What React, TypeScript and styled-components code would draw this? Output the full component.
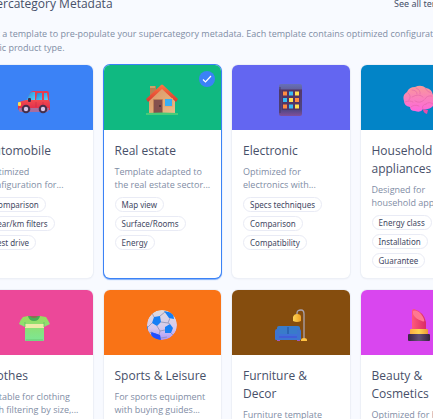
import React, { useState } from 'react';
import styled, { createGlobalStyle } from 'styled-components';

const GlobalStyle = createGlobalStyle`
  *, *::before, *::after { box-sizing: border-box; }
  body {
    margin: 0;
    background: #f8faff;
    overflow: hidden;
    font-family: "Open Sans", "Noto Sans", sans-serif;
    color: #475069;
  }
`;

const Page = styled.main`
  margin: 0 -45px 0 -25px;
  height: 100vh;
  overflow: hidden;
`;

const Header = styled.header`
  display: flex;
  justify-content: space-between;
  align-items: center;
  height: 24px;
  margin-top: -8px;
`;

const Heading = styled.h2`
  margin: 0;
  font-size: 12px;
  font-weight: 500;
  line-height: 24px;
`;

const HeaderLink = styled.a`
  width: 84px;
  font-family: "Noto Sans", "Open Sans", sans-serif;
  font-size: 9px;
  font-weight: 400;
  line-height: 20px;
  color: inherit;
  text-decoration: none;
  white-space: nowrap;
`;

const Intro = styled.p`
  margin: 11px 0 10px;
  font-size: 9px;
  line-height: 14px;
  color: #7f8da5;
`;

const Grid = styled.div`
  display: grid;
  grid-template-columns: repeat(4, minmax(0, 1fr));
  gap: 12px 11px;
`;

const Card = styled.button<{ $selected: boolean }>`
  position: relative;
  display: flex;
  flex-direction: column;
  align-items: stretch;
  justify-content: flex-start;
  padding: 0;
  border: 0;
  border-radius: 6px;
  background: #fff;
  color: inherit;
  font-family: inherit;
  text-align: left;
  cursor: pointer;
  box-shadow: ${(p) => (p.$selected ? '0 0 0 1px #3b82f6, 0 1px 1px 1px #3b82f6a0' : '0 0 0 1px #edf0f7, 0 1px 2px #1e293b14')};
`;

const Cover = styled.span<{ $color: string }>`
  display: flex;
  justify-content: center;
  height: 65px;
  padding-top: 19px;
  border-radius: 6px 6px 0 0;
  background: ${(p) => p.$color};
`;

const Picture = styled.svg`
  width: 32px;
  height: 32px;
`;

const Badge = styled.span`
  position: absolute;
  top: 6px;
  right: 6px;
  display: grid;
  place-items: center;
  width: 16px;
  height: 16px;
  border-radius: 50%;
  background: #3b82f6;
`;

const Body = styled.span`
  display: flex;
  flex-direction: column;
  padding: 12px 11px 10px;
`;

const Title = styled.span`
  font-size: 12px;
  font-weight: 500;
  line-height: 18px;
`;

const Description = styled.span`
  margin: 5px 0 6px;
  font-size: 9px;
  line-height: 13px;
  color: #7f8da5;
  white-space: pre;
`;

const Tags = styled.span`
  display: flex;
  flex-direction: column;
  align-items: flex-start;
  gap: 4px;
`;

const Tag = styled.span`
  height: 15px;
  padding: 0 6px;
  border: 1px solid #e9ebf5;
  border-radius: 8px;
  font-family: "Noto Sans", "Open Sans", sans-serif;
  font-size: 8px;
  font-weight: 400;
  line-height: 13px;
  color: #3f4863;
  white-space: nowrap;
`;

const Car = () => (
  <Picture viewBox="0 0 32 32" aria-hidden="true">
    <defs>
      <linearGradient id="carGlass" x2="1" y2="1"><stop stopColor="#2388d8" /><stop offset="1" stopColor="#55d4ff" /></linearGradient>
      <linearGradient id="carBody" x2="0" y2="1"><stop stopColor="#f24b50" /><stop offset="1" stopColor="#df294b" /></linearGradient>
    </defs>
    <path d="M9 17 12 9Q13 7 16 7H29Q31 7 31 10V17Z" fill="#e63d51" />
    <path d="M8 17 12 9Q13 8 15 8H17V17Z" fill="url(#carGlass)" />
    <path d="M19 10Q19 9 20 9H24V16H18Z M26 9H29L30 16H26Z" fill="url(#carGlass)" />
    <path d="M0 20Q1 17 8 16H31Q32 17 32 20V26H1Q0 26 0 24Z" fill="url(#carBody)" />
    <path d="M1 24H31Q31 28 28 28H3Q0 28 1 24Z" fill="#a96d9d" />
    <rect x="0" y="18" width="3" height="4" rx="1" fill="#ffdb4a" />
    <rect x="10" y="14" width="3" height="4" rx="1" fill="#442a4b" />
    <path d="M18 18V23M25 18V23" stroke="#c82945" strokeWidth=".6" />
    <circle cx="8" cy="25" r="4.3" fill="#45304d" /><circle cx="25" cy="25" r="4.3" fill="#45304d" />
    <circle cx="8" cy="25" r="2.2" fill="#d9c6ea" /><circle cx="25" cy="25" r="2.2" fill="#d9c6ea" />
  </Picture>
);

const House = () => (
  <Picture viewBox="0 0 32 32" aria-hidden="true">
    <defs>
      <linearGradient id="houseWall" x2="1" y2="1"><stop stopColor="#d99362" /><stop offset="1" stopColor="#eabd8b" /></linearGradient>
      <linearGradient id="houseRoof" x2="0" y2="1"><stop stopColor="#ff7541" /><stop offset="1" stopColor="#d73830" /></linearGradient>
    </defs>
    <path d="M4 2H10V14H4Z" fill="#b68052" /><path d="M4 2H9V4H4Z" fill="#cda068" />
    <path d="M3 15 16 3 29 15V30H3Z" fill="url(#houseWall)" />
    <path d="M15 1Q16 0 17 1L32 15 30 18 16 5 2 18 0 15Z" fill="url(#houseRoof)" />
    <rect x="7" y="15" width="10" height="15" rx="1" fill="#bb7e58" />
    <rect x="8" y="16" width="8" height="14" fill="#85504e" />
    <circle cx="14" cy="22" r=".9" fill="#432c35" />
    <rect x="18" y="14" width="9" height="9" rx="1" fill="#e6a970" />
    <rect x="19" y="15" width="7" height="7" fill="#37aff5" />
    <path d="M0 29Q16 28 32 29V31H0Z" fill="#47cc78" />
  </Picture>
);

const Phone = () => {
  const keys = ['#ff8b42', '#36bcf6', '#ffe052', '#36bcf6', '#ffe052', '#ff8b42', '#ff8b42', '#36bcf6', '#ffe052'];
  return (
    <Picture viewBox="0 0 32 32" aria-hidden="true">
      <defs>
        <linearGradient id="phoneBody" x2="0" y2="1"><stop stopColor="#6770b8" /><stop offset=".16" stopColor="#62629e" /><stop offset=".18" stopColor="#553869" /><stop offset=".8" stopColor="#4e4684" /><stop offset="1" stopColor="#82509a" /></linearGradient>
      </defs>
      <rect x="4" width="23" height="32" rx="2" fill="url(#phoneBody)" />
      <path d="M5 3V29" stroke="#483967" strokeWidth="1" />
      <rect x="7" y="6" width="18" height="20" fill="#51325f" opacity=".75" />
      {keys.map((fill, i) => (
        <rect key={i} x={8 + (i % 3) * 6} y={7.5 + Math.floor(i / 3) * 6.5} width="4" height="4" fill={fill} />
      ))}
    </Picture>
  );
};

const Brain = () => (
  <Picture viewBox="0 0 32 32" aria-hidden="true">
    <defs>
      <linearGradient id="brainFill" x2="0" y2="1"><stop stopColor="#f99a98" /><stop offset=".5" stopColor="#fa7fbd" /><stop offset="1" stopColor="#ff66df" /></linearGradient>
    </defs>
    <path d="M20 25 25 26 24 30Q20 29 20 25Z" fill="#e84bab" />
    <path d="M1 17Q-1 11 4 8 6 3 12 3 18 0 23 4 29 5 30 11 34 17 30 22 26 26 20 25 18 29 12 27 7 27 7 23 1 22 1 17Z" fill="url(#brainFill)" />
    <path d="M5 9Q9 12 6 16M9 6Q14 6 14 10M2 18Q7 16 10 18M13 4Q18 6 17 10M9 13Q16 9 20 13M22 4Q24 8 28 9M29 12Q24 11 22 15M30 20Q26 17 23 20M12 17Q17 20 21 16M8 23Q11 20 16 22M20 25Q18 21 23 20" fill="none" stroke="#e065a8" strokeWidth=".6" strokeLinecap="round" />
  </Picture>
);

const Shirt = () => (
  <Picture viewBox="0 0 32 32" aria-hidden="true">
    <defs>
      <linearGradient id="shirtFill" x2="0" y2="1"><stop stopColor="#99dc5c" /><stop offset="1" stopColor="#7ce695" /></linearGradient>
    </defs>
    <path d="M10 7H22L28 8Q30 11 32 15L26 18V31Q26 32 25 32H8Q7 32 7 31V18L1 15Q2 11 5 8Z" fill="url(#shirtFill)" />
    <path d="M7 15H26V19H7Z" fill="#f0e9a9" />
    <path d="M10 7H22Q21 12 16 12T10 7Z" fill="#4aac57" />
    <path d="M12 7H20Q19 9 16 9T12 7Z" fill="#926d50" />
    <path d="M7 13V18M26 13V18M8 31H25" stroke="#63b965" strokeWidth=".7" />
  </Picture>
);

const Ball = () => (
  <Picture viewBox="0 0 32 32" aria-hidden="true">
    <defs>
      <linearGradient id="ballFill" x2="0" y2="1"><stop stopColor="#dedbdd" /><stop offset=".6" stopColor="#d6c9ec" /><stop offset="1" stopColor="#a994ff" /></linearGradient>
      <clipPath id="ballClip"><circle cx="16" cy="16" r="15" /></clipPath>
    </defs>
    <g clipPath="url(#ballClip)">
      <circle cx="16" cy="16" r="15" fill="url(#ballFill)" />
      <path d="M8 8 14 7 15 13 11 17 6 14ZM19 18 24 15 27 19 25 24 19 24ZM18 2 27 4 28 10 23 9ZM0 15 2 18 2 24 0 25ZM5 23 14 26 15 32 6 30Z" fill="#167ff5" />
      <path d="M5 23 14 26 15 32 6 30Z" fill="#214eff" />
      <path d="M14 7 19 3M15 13 22 14 24 15M22 14 24 9M11 17 14 22 19 21M6 14 2 18M8 8 6 4M14 22 13 26M3 24 6 23M25 24 27 26M15 29 21 28" fill="none" stroke="#8f91b4" strokeWidth=".8" />
    </g>
  </Picture>
);

const Sofa = () => (
  <Picture viewBox="0 0 32 32" aria-hidden="true">
    <defs>
      <linearGradient id="lampFill"><stop stopColor="#ffd555" /><stop offset="1" stopColor="#efa023" /></linearGradient>
    </defs>
    <path d="M22 6V4Q22 1 26 1 29 1 29 5V31" fill="none" stroke="#aaa4b0" strokeWidth="1.3" />
    <path d="M18 8Q19 5 22 5 26 5 26 8V12Q22 14 18 12Z" fill="url(#lampFill)" />
    <path d="M26 31Q26 29 29 29T32 31V32H26Z" fill="#ffc243" />
    <path d="M2 30H5V32H2ZM22 30H25V32H22Z" fill="#9c5ac0" />
    <rect x="2" y="17" width="23" height="12" rx="2" fill="#397bca" />
    <path d="M13 18V25" stroke="#204f9e" strokeWidth="1" />
    <path d="M4 25H23V31H4Z" fill="#3f70d8" />
    <path d="M0 22Q0 20 2 20T4 22V27H22V22Q22 20 24 20T26 22V30Q26 31 25 31H1Q0 31 0 30Z" fill="#3d74d0" />
    <path d="M4 27H22V29H4Z" fill="#425dd7" />
  </Picture>
);

const Lipstick = () => (
  <Picture viewBox="0 0 32 32" aria-hidden="true">
    <defs>
      <linearGradient id="stickFill"><stop stopColor="#ff5979" /><stop offset="1" stopColor="#d92c66" /></linearGradient>
      <linearGradient id="stickGold"><stop stopColor="#ffad42" /><stop offset=".5" stopColor="#ffd552" /><stop offset="1" stopColor="#e99738" /></linearGradient>
      <linearGradient id="stickBase"><stop stopColor="#392642" /><stop offset=".5" stopColor="#635075" /><stop offset="1" stopColor="#352340" /></linearGradient>
    </defs>
    <path d="M9 21V2Q9 0 11 0 21 3 23 13V21Z" fill="url(#stickFill)" />
    <path d="M10 2Q15 0 20 8 23 14 19 12 12 10 10 5Z" fill="#ff7891" />
    <rect x="7" y="20" width="18" height="6" rx="1" fill="url(#stickGold)" />
    <rect x="5" y="25" width="22" height="7" rx="1" fill="url(#stickBase)" />
  </Picture>
);

interface Template {
  title: string;
  description: string;
  color: string;
  Icon: React.FC;
  tags: string[];
}

const templates: Template[] = [
  { title: 'Automobile', description: 'Optimized\nconfiguration for...', color: '#3b82f6', Icon: Car, tags: ['Comparison', 'Year/km filters', 'Test drive'] },
  { title: 'Real estate', description: 'Template adapted to\nthe real estate sector...', color: '#10b981', Icon: House, tags: ['Map view', 'Surface/Rooms', 'Energy'] },
  { title: 'Electronic', description: 'Optimized for\nelectronics with...', color: '#6366f1', Icon: Phone, tags: ['Specs techniques', 'Comparison', 'Compatibility'] },
  { title: 'Household appliances', description: 'Designed for\nhousehold appliances...', color: '#0284c7', Icon: Brain, tags: ['Energy class', 'Installation', 'Guarantee'] },
  { title: 'Clothes', description: 'Suitable for clothing\nwith filtering by size,...', color: '#ec4899', Icon: Shirt, tags: ['Sizes', 'Colors'] },
  { title: 'Sports & Leisure', description: 'For sports equipment\nwith buying guides...', color: '#f97316', Icon: Ball, tags: ['Guides', 'Comparison'] },
  { title: 'Furniture & Decor', description: 'Furniture template\nwith dimensions...', color: '#854d0e', Icon: Sofa, tags: ['Dimensions', 'Materials'] },
  { title: 'Beauty & Cosmetics', description: 'Optimized for beauty\nproducts...', color: '#d946ef', Icon: Lipstick, tags: ['Ingredients', 'Skin type'] },
];

export default function App() {
  const [selected, setSelected] = useState('Real estate');
  return (
    <>
      <GlobalStyle />
      <Page>
        <Header>
          <Heading>Supercategory Metadata</Heading>
          <HeaderLink href="#templates">See all templates</HeaderLink>
        </Header>
        <Intro>
          Select a template to pre-populate your supercategory metadata. Each template contains optimized configurations for a
          specific product type.
        </Intro>
        <Grid id="templates">
          {templates.map(({ title, description, color, Icon, tags }) => (
            <Card
              key={title}
              type="button"
              $selected={title === selected}
              aria-pressed={title === selected}
              onClick={() => setSelected(title)}
            >
              <Cover $color={color}><Icon /></Cover>
              {title === selected && (
                <Badge>
                  <svg width="10" height="10" viewBox="0 0 10 10" aria-hidden="true">
                    <path d="M1 5.5 3.5 8 9 2" fill="none" stroke="#fff" strokeWidth="1.2" />
                  </svg>
                </Badge>
              )}
              <Body>
                <Title>{title}</Title>
                <Description>{description}</Description>
                <Tags>{tags.map((tag) => <Tag key={tag}>{tag}</Tag>)}</Tags>
              </Body>
            </Card>
          ))}
        </Grid>
      </Page>
    </>
  );
}
